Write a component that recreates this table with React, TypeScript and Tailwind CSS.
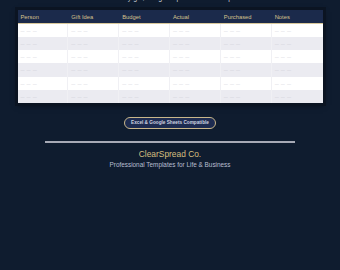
import React from "react";

const columns = ["Person", "Gift Idea", "Budget", "Actual", "Purchased", "Notes"];
const rows = [0, 1, 2, 3, 4, 5];

export default function App() {
  return (
    <div
      className="w-[340px] h-[270px] overflow-hidden bg-[#0f1c2f] flex flex-col items-center"
      style={{ fontFamily: '"Liberation Sans", Arial, sans-serif' }}
    >
      <p className="-mt-[6px] h-[8px] text-[7px] leading-[8px] text-[#c9ccd6]">
        Track every gift, budget &amp; purchase in one place
      </p>

      <div className="mt-[7.5px] w-[305px] bg-white shadow-[0_0_0_3px_#0b1422,0_2px_6px_rgba(0,0,0,0.6)]">
        <div className="grid grid-cols-6 h-[14px] bg-[#1b2a4b] border-b border-[#d8c79a]">
          {columns.map((c) => (
            <div
              key={c}
              className="pl-[3px] text-[5.8px] leading-[14px] text-[#d6c28e]"
            >
              {c}
            </div>
          ))}
        </div>
        {rows.map((r) => (
          <div
            key={r}
            className={`grid grid-cols-6 h-[13.3px] ${
              r % 2 === 1 ? "bg-[#ebebf1]" : "bg-white"
            }`}
          >
            {columns.map((c, i) => (
              <div
                key={c}
                className={`pl-[3px] text-[4px] leading-[13px] text-[#c4c6d0] tracking-[0.5px] ${
                  i < 5 ? "border-r border-[#f0f0f4]" : ""
                }`}
              >
                — — —
              </div>
            ))}
          </div>
        ))}
      </div>

      <div className="mt-[14px] h-[12px] px-[6px] flex items-center rounded-full border-[1.5px] border-[#c8b68a] bg-[#1d2b50]">
        <span className="text-[4.7px] font-bold text-[#cfd3e0] leading-none whitespace-nowrap">
          Excel &amp; Google Sheets Compatible
        </span>
      </div>

      <div className="mt-[12px] w-[250px] h-[1.5px] bg-[#a7aab6]" />

      <p className="mt-[6px] text-[8.4px] leading-[10px] text-[#d6bf7f]">
        ClearSpread Co.
      </p>
      <p className="mt-[2px] text-[6.4px] leading-[8px] text-[#b8bfd0]">
        Professional Templates for Life &amp; Business
      </p>
    </div>
  );
}
